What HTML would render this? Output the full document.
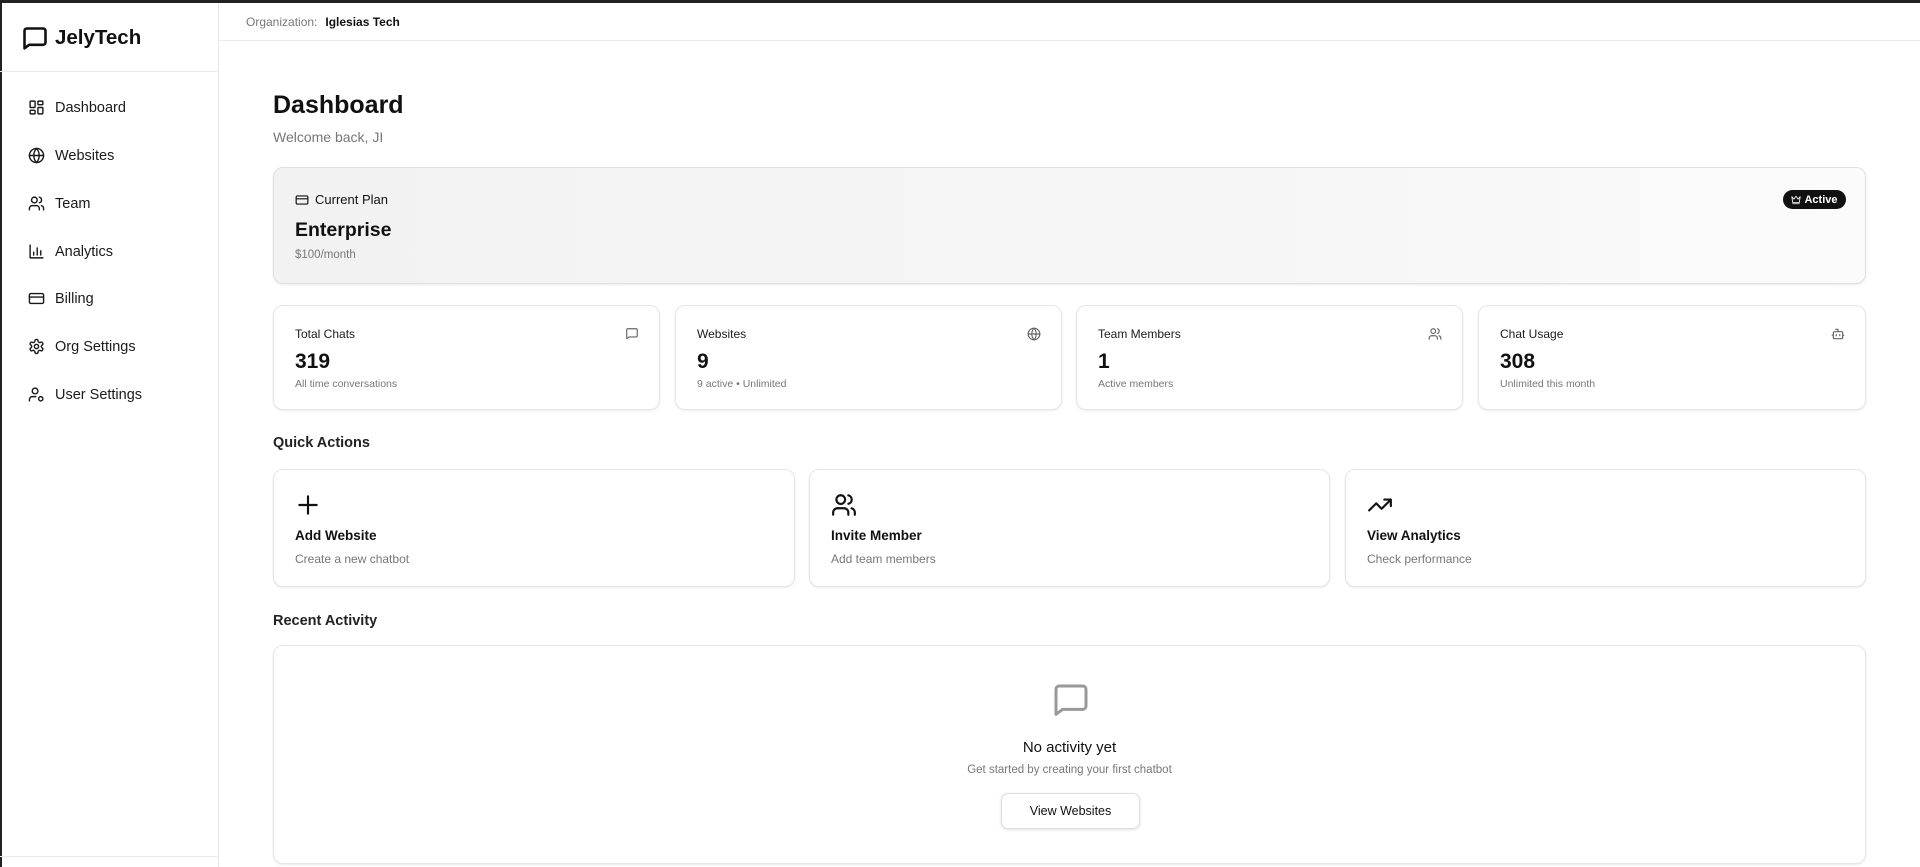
<!DOCTYPE html>
<html><head><meta charset="utf-8"><style>
*{box-sizing:border-box;margin:0;padding:0}
body{width:1920px;height:867px;overflow:hidden;background:#fff;font-family:"Liberation Sans",sans-serif;color:#111;position:relative}
.a{position:absolute}
svg{fill:none;stroke:currentColor;stroke-width:2;stroke-linecap:round;stroke-linejoin:round}
.nav{position:absolute;left:28px;display:flex;align-items:center;font-size:14.5px;color:#1a1a1a}
.nav svg{width:17px;height:17px;margin-right:10px}
.card{position:absolute;border:1px solid #e6e6e6;border-radius:10px;background:#fff;box-shadow:0 1px 2px rgba(0,0,0,.08)}
.lbl{position:absolute;left:21px;top:21px;font-size:12px;color:#1a1a1a}
.num{position:absolute;left:21px;top:44px;font-size:21px;font-weight:bold}
.sub{position:absolute;left:21px;top:72px;font-size:10.5px;color:#777}
.ic{position:absolute;right:20px;top:21px;width:14px;height:14px;color:#666}
.qt{position:absolute;left:21px;top:58px;font-size:13.5px;font-weight:bold}
.qs{position:absolute;left:21px;top:82px;font-size:12px;color:#777}
.qi{position:absolute;left:21px;top:22px;width:26px;height:26px}
</style></head><body>
<div class="a" style="left:0;top:0;width:1920px;height:3px;background:#222"></div>
<div class="a" style="left:0;top:3px;width:2px;height:864px;background:#222"></div>
<div class="a" style="left:218px;top:3px;width:1px;height:864px;background:#e8e8e8"></div>
<div class="a" style="left:0;top:71px;width:218px;height:1px;background:#ececec"></div>
<div class="a" style="left:0;top:856px;width:218px;height:1px;background:#ececec"></div>
<svg class="a" style="left:21px;top:25px;width:28px;height:28px;stroke-width:2.2" viewBox="0 0 24 24"><path d="M3 20V5a2 2 0 0 1 2-2h14a2 2 0 0 1 2 2v10a2 2 0 0 1-2 2H7z"/></svg>
<div class="a" style="left:55px;top:26px;font-size:20.5px;font-weight:bold">JelyTech</div>
<div class="nav" style="top:99px"><svg viewBox="0 0 24 24"><rect x="3" y="3" width="7" height="9" rx="1"/><rect x="14" y="3" width="7" height="5" rx="1"/><rect x="14" y="12" width="7" height="9" rx="1"/><rect x="3" y="16" width="7" height="5" rx="1"/></svg>Dashboard</div>
<div class="nav" style="top:147px"><svg viewBox="0 0 24 24"><circle cx="12" cy="12" r="10"/><path d="M2 12h20M12 2a15 15 0 0 1 0 20M12 2a15 15 0 0 0 0 20"/></svg>Websites</div>
<div class="nav" style="top:195px"><svg viewBox="0 0 24 24"><path d="M16 21v-2a4 4 0 0 0-4-4H6a4 4 0 0 0-4 4v2"/><circle cx="9" cy="7" r="4"/><path d="M22 21v-2a4 4 0 0 0-3-3.9M16 3.1a4 4 0 0 1 0 7.8"/></svg>Team</div>
<div class="nav" style="top:243px"><svg viewBox="0 0 24 24"><path d="M3 3v18h18M8 17v-4M13 17V7M18 17v-6"/></svg>Analytics</div>
<div class="nav" style="top:290px"><svg viewBox="0 0 24 24"><rect x="2" y="5" width="20" height="14" rx="2"/><path d="M2 10h20"/></svg>Billing</div>
<div class="nav" style="top:338px"><svg viewBox="0 0 24 24"><circle cx="12" cy="12" r="3"/><path d="M12.2 2h-.4a2 2 0 0 0-2 2v.2a2 2 0 0 1-1 1.7l-.4.3a2 2 0 0 1-2 0l-.2-.1a2 2 0 0 0-2.7.7l-.2.4a2 2 0 0 0 .7 2.7l.2.1a2 2 0 0 1 1 1.7v.5a2 2 0 0 1-1 1.7l-.2.1a2 2 0 0 0-.7 2.7l.2.4a2 2 0 0 0 2.7.7l.2-.1a2 2 0 0 1 2 0l.4.3a2 2 0 0 1 1 1.7v.2a2 2 0 0 0 2 2h.4a2 2 0 0 0 2-2v-.2a2 2 0 0 1 1-1.7l.4-.3a2 2 0 0 1 2 0l.2.1a2 2 0 0 0 2.7-.7l.2-.4a2 2 0 0 0-.7-2.7l-.2-.1a2 2 0 0 1-1-1.7v-.5a2 2 0 0 1 1-1.7l.2-.1a2 2 0 0 0 .7-2.7l-.2-.4a2 2 0 0 0-2.7-.7l-.2.1a2 2 0 0 1-2 0l-.4-.3a2 2 0 0 1-1-1.7V4a2 2 0 0 0-2-2z"/></svg>Org Settings</div>
<div class="nav" style="top:386px"><svg viewBox="0 0 24 24"><circle cx="10" cy="7" r="4"/><path d="M2 21v-2a4 4 0 0 1 4-4h5"/><circle cx="18" cy="18" r="3"/></svg>User Settings</div>
<div class="a" style="left:219px;top:40px;width:1701px;height:1px;background:#ececec"></div>
<div class="a" style="left:246px;top:15px;font-size:12px;color:#777">Organization:<span style="color:#111;margin-left:8px;font-weight:bold">Iglesias Tech</span></div>
<div class="a" style="left:273px;top:91px;font-size:25px;font-weight:bold">Dashboard</div>
<div class="a" style="left:273px;top:129px;font-size:14px;color:#777">Welcome back, JI</div>
<div class="card" style="left:273px;top:167px;width:1593px;height:117px;background:linear-gradient(90deg,#f2f2f2,#f6f6f6 60%,#fbfbfb);border-color:#e0e0e0">
 <svg class="a" style="left:21px;top:25px;width:14px;height:14px" viewBox="0 0 24 24"><rect x="2" y="5" width="20" height="14" rx="2"/><path d="M2 10h20"/></svg>
 <div class="a" style="left:41px;top:24px;font-size:13px">Current Plan</div>
 <div class="a" style="left:21px;top:51px;font-size:19.5px;font-weight:bold">Enterprise</div>
 <div class="a" style="left:21px;top:81px;font-size:11.5px;color:#777">$100/month</div>
 <div class="a" style="left:1509px;top:22px;width:63px;height:19px;border-radius:10px;background:#111;color:#fff;font-size:11px;font-weight:bold;display:flex;align-items:center;justify-content:center"><svg style="width:10px;height:10px;margin-right:3px" viewBox="0 0 24 24"><path d="M2 4l5 6 5-7 5 7 5-6-2 14H4zM4 21h16"/></svg>Active</div>
</div>
<div class="card" style="left:273px;top:305px;width:387px;height:105px"><div class="lbl">Total Chats</div><svg class="ic" viewBox="0 0 24 24"><path d="M3 20V5a2 2 0 0 1 2-2h14a2 2 0 0 1 2 2v10a2 2 0 0 1-2 2H7z"/></svg><div class="num">319</div><div class="sub">All time conversations</div></div>
<div class="card" style="left:675px;top:305px;width:387px;height:105px"><div class="lbl">Websites</div><svg class="ic" viewBox="0 0 24 24"><circle cx="12" cy="12" r="10"/><path d="M2 12h20M12 2a15 15 0 0 1 0 20M12 2a15 15 0 0 0 0 20"/></svg><div class="num">9</div><div class="sub">9 active • Unlimited</div></div>
<div class="card" style="left:1076px;top:305px;width:387px;height:105px"><div class="lbl">Team Members</div><svg class="ic" viewBox="0 0 24 24"><path d="M16 21v-2a4 4 0 0 0-4-4H6a4 4 0 0 0-4 4v2"/><circle cx="9" cy="7" r="4"/><path d="M22 21v-2a4 4 0 0 0-3-3.9M16 3.1a4 4 0 0 1 0 7.8"/></svg><div class="num">1</div><div class="sub">Active members</div></div>
<div class="card" style="left:1478px;top:305px;width:388px;height:105px"><div class="lbl">Chat Usage</div><svg class="ic" viewBox="0 0 24 24"><path d="M12 8V4H8"/><rect x="4" y="8" width="16" height="12" rx="2"/><path d="M2 14h2M20 14h2M15 13v2M9 13v2"/></svg><div class="num">308</div><div class="sub">Unlimited this month</div></div>
<div class="a" style="left:273px;top:435px;font-size:14.5px;font-weight:bold;color:#222">Quick Actions</div>
<div class="card" style="left:273px;top:469px;width:522px;height:118px"><svg class="qi" viewBox="0 0 24 24"><path d="M12 4v16M4 12h16"/></svg><div class="qt">Add Website</div><div class="qs">Create a new chatbot</div></div>
<div class="card" style="left:809px;top:469px;width:521px;height:118px"><svg class="qi" viewBox="0 0 24 24"><path d="M16 21v-2a4 4 0 0 0-4-4H6a4 4 0 0 0-4 4v2"/><circle cx="9" cy="7" r="4"/><path d="M22 21v-2a4 4 0 0 0-3-3.9M16 3.1a4 4 0 0 1 0 7.8"/></svg><div class="qt">Invite Member</div><div class="qs">Add team members</div></div>
<div class="card" style="left:1345px;top:469px;width:521px;height:118px"><svg class="qi" viewBox="0 0 24 24"><path d="M22 7l-8.5 8.5-5-5L2 17M16 7h6v6"/></svg><div class="qt">View Analytics</div><div class="qs">Check performance</div></div>
<div class="a" style="left:273px;top:613px;font-size:14.5px;font-weight:bold;color:#222">Recent Activity</div>
<div class="card" style="left:273px;top:645px;width:1593px;height:219px">
 <svg class="a" style="left:777px;top:35px;width:40px;height:40px;color:#999;stroke-width:1.8" viewBox="0 0 24 24"><path d="M3 20V5a2 2 0 0 1 2-2h14a2 2 0 0 1 2 2v10a2 2 0 0 1-2 2H7z"/></svg>
 <div class="a" style="left:0;width:100%;top:93px;text-align:center;font-size:15px">No activity yet</div>
 <div class="a" style="left:0;width:100%;top:118px;text-align:center;font-size:11.5px;color:#777">Get started by creating your first chatbot</div>
 <div class="a" style="left:727px;top:147px;width:139px;height:36px;border:1px solid #ddd;border-radius:7px;box-shadow:0 1px 3px rgba(0,0,0,.12);display:flex;align-items:center;justify-content:center;font-size:12.5px">View Websites</div>
</div>
</body></html>
